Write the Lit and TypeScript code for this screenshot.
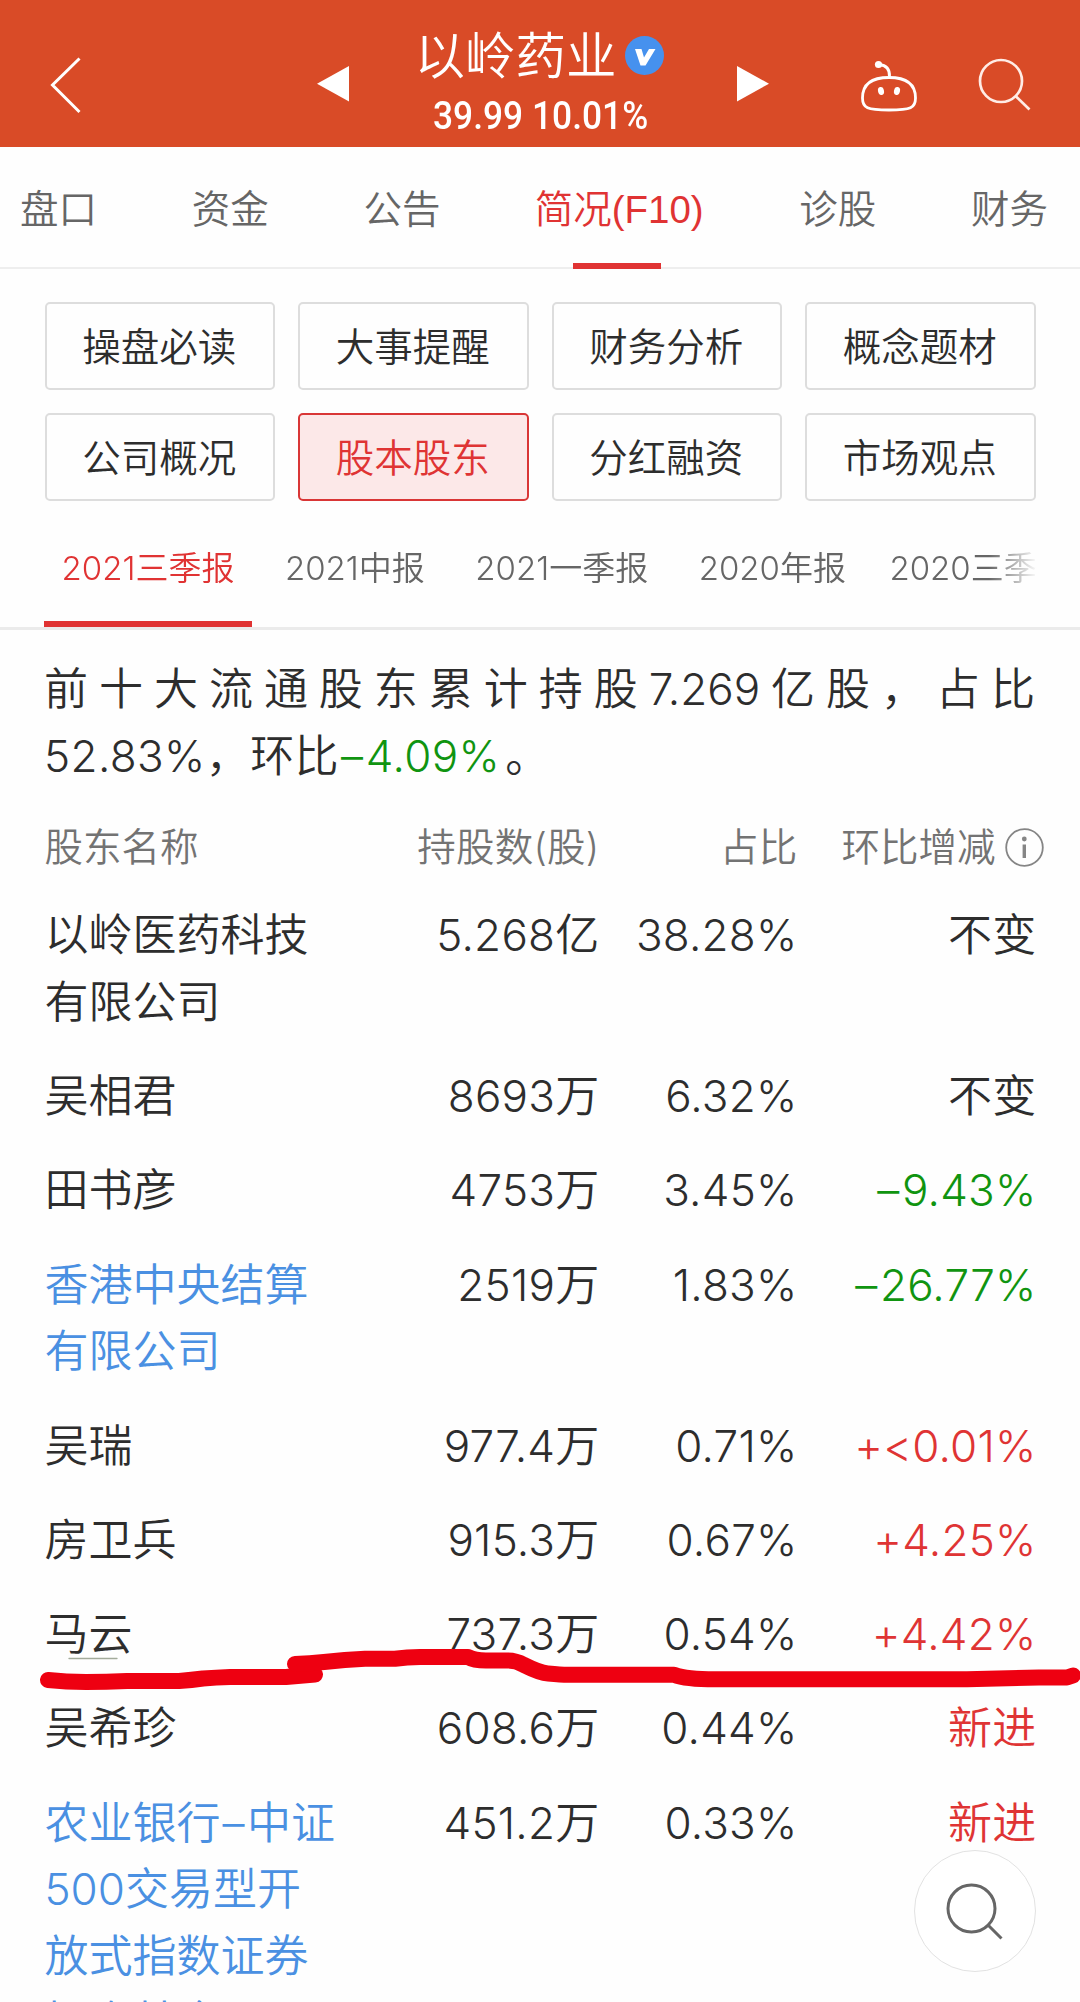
import { LitElement, html, css, svg } from "lit";
import { customElement } from "lit/decorators.js";
import { classMap } from "lit/directives/class-map.js";

type Tone = "flat" | "up" | "down";

interface Holder {
  name: string[];
  shares: string;
  ratio: string;
  change: string;
  tone: Tone;
  link?: boolean;
}

const TABS = ["盘口", "资金", "公告", "简况(F10)", "诊股", "财务"];
const SECTIONS = ["操盘必读", "大事提醒", "财务分析", "概念题材", "公司概况", "股本股东", "分红融资", "市场观点"];
const PERIODS = ["2021三季报", "2021中报", "2021一季报", "2020年报", "2020三季报"];
const HOLDERS: Holder[] = [
  { name: ["以岭医药科技", "有限公司"], shares: "5.268亿", ratio: "38.28%", change: "不变", tone: "flat" },
  { name: ["吴相君"], shares: "8693万", ratio: "6.32%", change: "不变", tone: "flat" },
  { name: ["田书彦"], shares: "4753万", ratio: "3.45%", change: "–9.43%", tone: "down" },
  { name: ["香港中央结算", "有限公司"], shares: "2519万", ratio: "1.83%", change: "–26.77%", tone: "down", link: true },
  { name: ["吴瑞"], shares: "977.4万", ratio: "0.71%", change: "+<0.01%", tone: "up" },
  { name: ["房卫兵"], shares: "915.3万", ratio: "0.67%", change: "+4.25%", tone: "up" },
  { name: ["马云"], shares: "737.3万", ratio: "0.54%", change: "+4.42%", tone: "up" },
  { name: ["吴希珍"], shares: "608.6万", ratio: "0.44%", change: "新进", tone: "up" },
  {
    name: ["农业银行–中证", "500交易型开", "放式指数证券", "投资基金"],
    shares: "451.2万", ratio: "0.33%", change: "新进", tone: "up", link: true,
  },
];

/** Gives the en dash a little side bearing so it does not touch its neighbours. */
const withDash = (text: string) => {
  const at = text.indexOf("–");
  return at < 0 ? text : html`${text.slice(0, at)}<span class="dash">–</span>${text.slice(at + 1)}`;
};

@customElement("app-root")
export class AppRoot extends LitElement {
  static styles = css`
    :host {
      display: block;
      position: relative;
      width: 1080px;
      height: 2002px;
      overflow: hidden;
      background: #fefefe;
      color: #2d2d2d;
      font-family: Inter, "Noto Sans CJK SC", sans-serif;
      font-weight: 350;
      font-size: 44px;
      line-height: 66.5px;
    }
    * { box-sizing: border-box; }
    svg { display: block; flex: none; }

    .top {
      height: 146.5px;
      background: #d94b27;
      color: #fff;
      display: flex;
      align-items: flex-start;
    }
    .back { margin: 56px 0 0 49px; }
    .prev { margin: 66px 0 0 235px; }
    .quote { width: 388px; height: 146px; display: flex; flex-direction: column; align-items: flex-start; }
    .title { display: flex; align-items: center; height: 60px; margin: 26px 0 0 65.5px; font-size: 50.5px; white-space: nowrap; }
    .badge { margin: -2px 0 0 8.5px; }
    .price {
      margin: 8px 0 0 84px;
      height: 44px;
      line-height: 44px;
      font-family: Roboto, sans-serif;
      font-weight: 500;
      font-size: 39.5px;
      white-space: nowrap;
      transform: scaleX(0.895);
      transform-origin: left center;
    }
    .next { margin-top: 66px; }
    .robot { margin: 58px 0 0 91px; }
    .find { margin: 57px 0 0 60px; }

    .tabs {
      height: 122.5px;
      border-bottom: 2px solid #eee;
      display: flex;
      gap: 94.7px;
      padding-left: 20px;
      font-size: 38.5px;
      color: #666;
      white-space: nowrap;
    }
    .tab { height: 122.5px; display: flex; flex-direction: column; align-items: center; }
    .tab-label { height: 116.5px; line-height: 125px; }
    .tab.on { color: #e03333; width: 168px; margin-right: 1.5px; }
    .tab.on .tab-label { font-family: "Liberation Sans", "Noto Sans CJK SC", sans-serif; }
    .tab-bar { width: 88px; height: 6px; margin-right: 4px; background: #e03333; }

    .sections {
      display: grid;
      grid-template-columns: repeat(4, 1fr);
      grid-auto-rows: 88px;
      gap: 23px;
      padding: 33px 44.5px 0;
    }
    .section {
      border: 2px solid #ddd;
      border-radius: 5px;
      font-size: 38.5px;
      display: flex;
      align-items: center;
      justify-content: center;
      padding: 2px 1px 0 0;
    }
    .section.on { background: #fce8e8; border-color: #d93636; color: #df3434; }

    .periods { height: 129px; border-bottom: 3px solid #ebebeb; padding: 0 40px 0 44px; }
    .strip {
      display: flex;
      gap: 15.5px;
      height: 126px;
      overflow: hidden;
      font-size: 33px;
      color: #666;
      white-space: nowrap;
      mask-image: linear-gradient(to right, #000 945px, transparent 994px);
      -webkit-mask-image: linear-gradient(to right, #000 945px, transparent 994px);
    }
    .period { flex: none; padding: 0 17.5px; line-height: 135px; height: 126px; }
    .period.on { color: #e03333; border-bottom: 6px solid #e03333; }
    .period:last-child { margin-left: -7px; }

    .summary { margin: 0; padding: 26px 45px 1px 44px; }
    .line { display: block; }
    .line.full { text-align: justify; text-align-last: justify; }
    .line.rest { letter-spacing: 0.4px; }
    .stop { margin-left: 5px; }
    .dash { margin: 0 2.5px 0 2px; }

    .row { display: grid; grid-template-columns: 297px 258px 198px 239px; padding: 13.9px 44.5px; }
    .row.head { padding: 24px 44.5px 8px; color: #737373; font-size: 38.5px; }
    .num { text-align: right; white-space: nowrap; letter-spacing: 0.25px; }
    .name { white-space: nowrap; }
    .link { color: #4a90e2; }
    .up { color: #df3434; }
    .down { color: #109410; }
    .head-change { display: flex; align-items: center; gap: 9px; justify-content: flex-end; margin-right: -7px; white-space: nowrap; }
    .info { margin-top: -1px; }

    .mark { position: absolute; left: 0; top: 1640px; }
    .float {
      position: absolute;
      left: 914px;
      top: 1850px;
      width: 122px;
      height: 122px;
      border: 1.5px solid #e2e2e2;
      border-radius: 50%;
      background: #fff;
      display: flex;
      align-items: center;
      justify-content: center;
    }
  `;

  private header() {
    return html`
      <header class="top">
        <svg class="back" width="33" height="58" viewBox="0 0 33 58" fill="none" stroke="#fff" stroke-width="3">
          <path d="M30.5 2.500L3.500 29L30.500 56"/>
        </svg>
        <svg class="prev" width="32" height="36" viewBox="0 0 32 36"><path d="M32 0V35.500L0 17.700Z" fill="#fff"/></svg>
        <div class="quote">
          <div class="title">
            以岭药业
            <svg class="badge" width="39" height="39" viewBox="0 0 39 39">
              <circle cx="19.500" cy="19.500" r="19.500" fill="#4691ee"/>
              <path d="M10 13H16.500L19 21.500L24 13H30.500L20.500 29.500H15.500Z" fill="#fff"/>
            </svg>
          </div>
          <div class="price">39.99 10.01%</div>
        </div>
        <svg class="next" width="32" height="36" viewBox="0 0 32 36"><path d="M0 0V35.500L32 17.700Z" fill="#fff"/></svg>
        <svg class="robot" width="58" height="56" viewBox="0 0 58 56" fill="none" stroke="#fff" stroke-width="2.800">
          <path d="M29 19.500C44 19.500 55.500 24 55.500 40C55.500 50 51 52 29 52C7 52 2.500 50 2.500 40C2.500 24 14 19.500 29 19.500Z"/>
          <path d="M19 6.500C26 7 30 11 29.500 19"/>
          <circle cx="18.500" cy="6.500" r="3.600" fill="#fff" stroke="none"/>
          <ellipse cx="21" cy="33" rx="3" ry="4" fill="#fff" stroke="none" transform="rotate(-12 21 33)"/>
          <ellipse cx="37" cy="33" rx="3" ry="4" fill="#fff" stroke="none" transform="rotate(12 37 33)"/>
        </svg>
        <svg class="find" width="54" height="56" viewBox="0 0 54 56" fill="none" stroke="#ffece6" stroke-width="2.700">
          <circle cx="23" cy="24" r="21"/>
          <path d="M37.500 39L51.500 52.500"/>
        </svg>
      </header>
    `;
  }

  private marker() {
    return svg`
      <svg class="mark" width="1080" height="60" viewBox="0 1640 1080 60" fill="none"
        stroke="#ee0011" stroke-width="16" stroke-linecap="round" stroke-linejoin="round">
        <path d="M69 1658.500H117" stroke="#a3ab9b" stroke-width="1.300"/>
        <path d="M48 1680Q66 1682 86 1682Q106 1682 127 1681H179Q192 1680 203 1678.500Q216 1677.500 230 1677H286L315 1674.500"/>
        <path d="M295 1664Q310 1663.500 324 1662Q345 1659.500 365 1658.700H395Q407 1657.300 420 1657H468Q474 1660.500 486 1660.500H508Q516 1660.500 524 1665Q540 1673 548 1673.500Q564 1675 570 1674.700H674Q686 1679.300 715 1679.300H967L1039 1677.500H1067L1073 1675.500"/>
      </svg>
    `;
  }

  render() {
    return html`
      ${this.header()}
      <nav class="tabs">
        ${TABS.map((t, i) => html`
          <div class=${classMap({ tab: true, on: i === 3 })}>
            <span class="tab-label">${t}</span>${i === 3 ? html`<div class="tab-bar"></div>` : ""}
          </div>`)}
      </nav>
      <div class="sections">
        ${SECTIONS.map((s, i) => html`<div class=${classMap({ section: true, on: i === 5 })}>${s}</div>`)}
      </div>
      <div class="periods">
        <div class="strip">
          ${PERIODS.map((p, i) => html`<div class=${classMap({ period: true, on: i === 0 })}>${p}</div>`)}
        </div>
      </div>
      <p class="summary">
        <span class="line full">前十大流通股东累计持股7.269亿股，占比</span>
        <span class="line rest">52.83%，环比<span class="down">${withDash("–4.09%")}</span><span class="stop">。</span></span>
      </p>
      <div class="row head">
        <div>股东名称</div>
        <div class="num">持股数(股)</div>
        <div class="num">占比</div>
        <div class="head-change">
          环比增减
          <svg class="info" width="39" height="40" viewBox="0 0 39 40">
            <circle cx="19.500" cy="20.500" r="18.300" fill="none" stroke="#858585" stroke-width="1.800"/>
            <circle cx="19.300" cy="12" r="2.400" fill="#858585"/>
            <path d="M19.300 17.500V31" stroke="#858585" stroke-width="3.400"/>
          </svg>
        </div>
      </div>
      ${HOLDERS.map((h) => html`
        <div class="row">
          <div class=${classMap({ name: true, link: !!h.link })}>${h.name.map((l) => html`<span class="line">${withDash(l)}</span>`)}</div>
          <div class="num">${h.shares}</div>
          <div class="num">${h.ratio}</div>
          <div class=${classMap({ num: true, [h.tone]: true })}>${withDash(h.change)}</div>
        </div>`)}
      ${this.marker()}
      <div class="float">
        <svg width="64" height="64" viewBox="0 0 64 64" fill="none" stroke="#666" stroke-width="3">
          <circle cx="28.500" cy="29.500" r="23.500"/>
          <path d="M45.500 46.500L58.500 59.500"/>
        </svg>
      </div>
    `;
  }
}
